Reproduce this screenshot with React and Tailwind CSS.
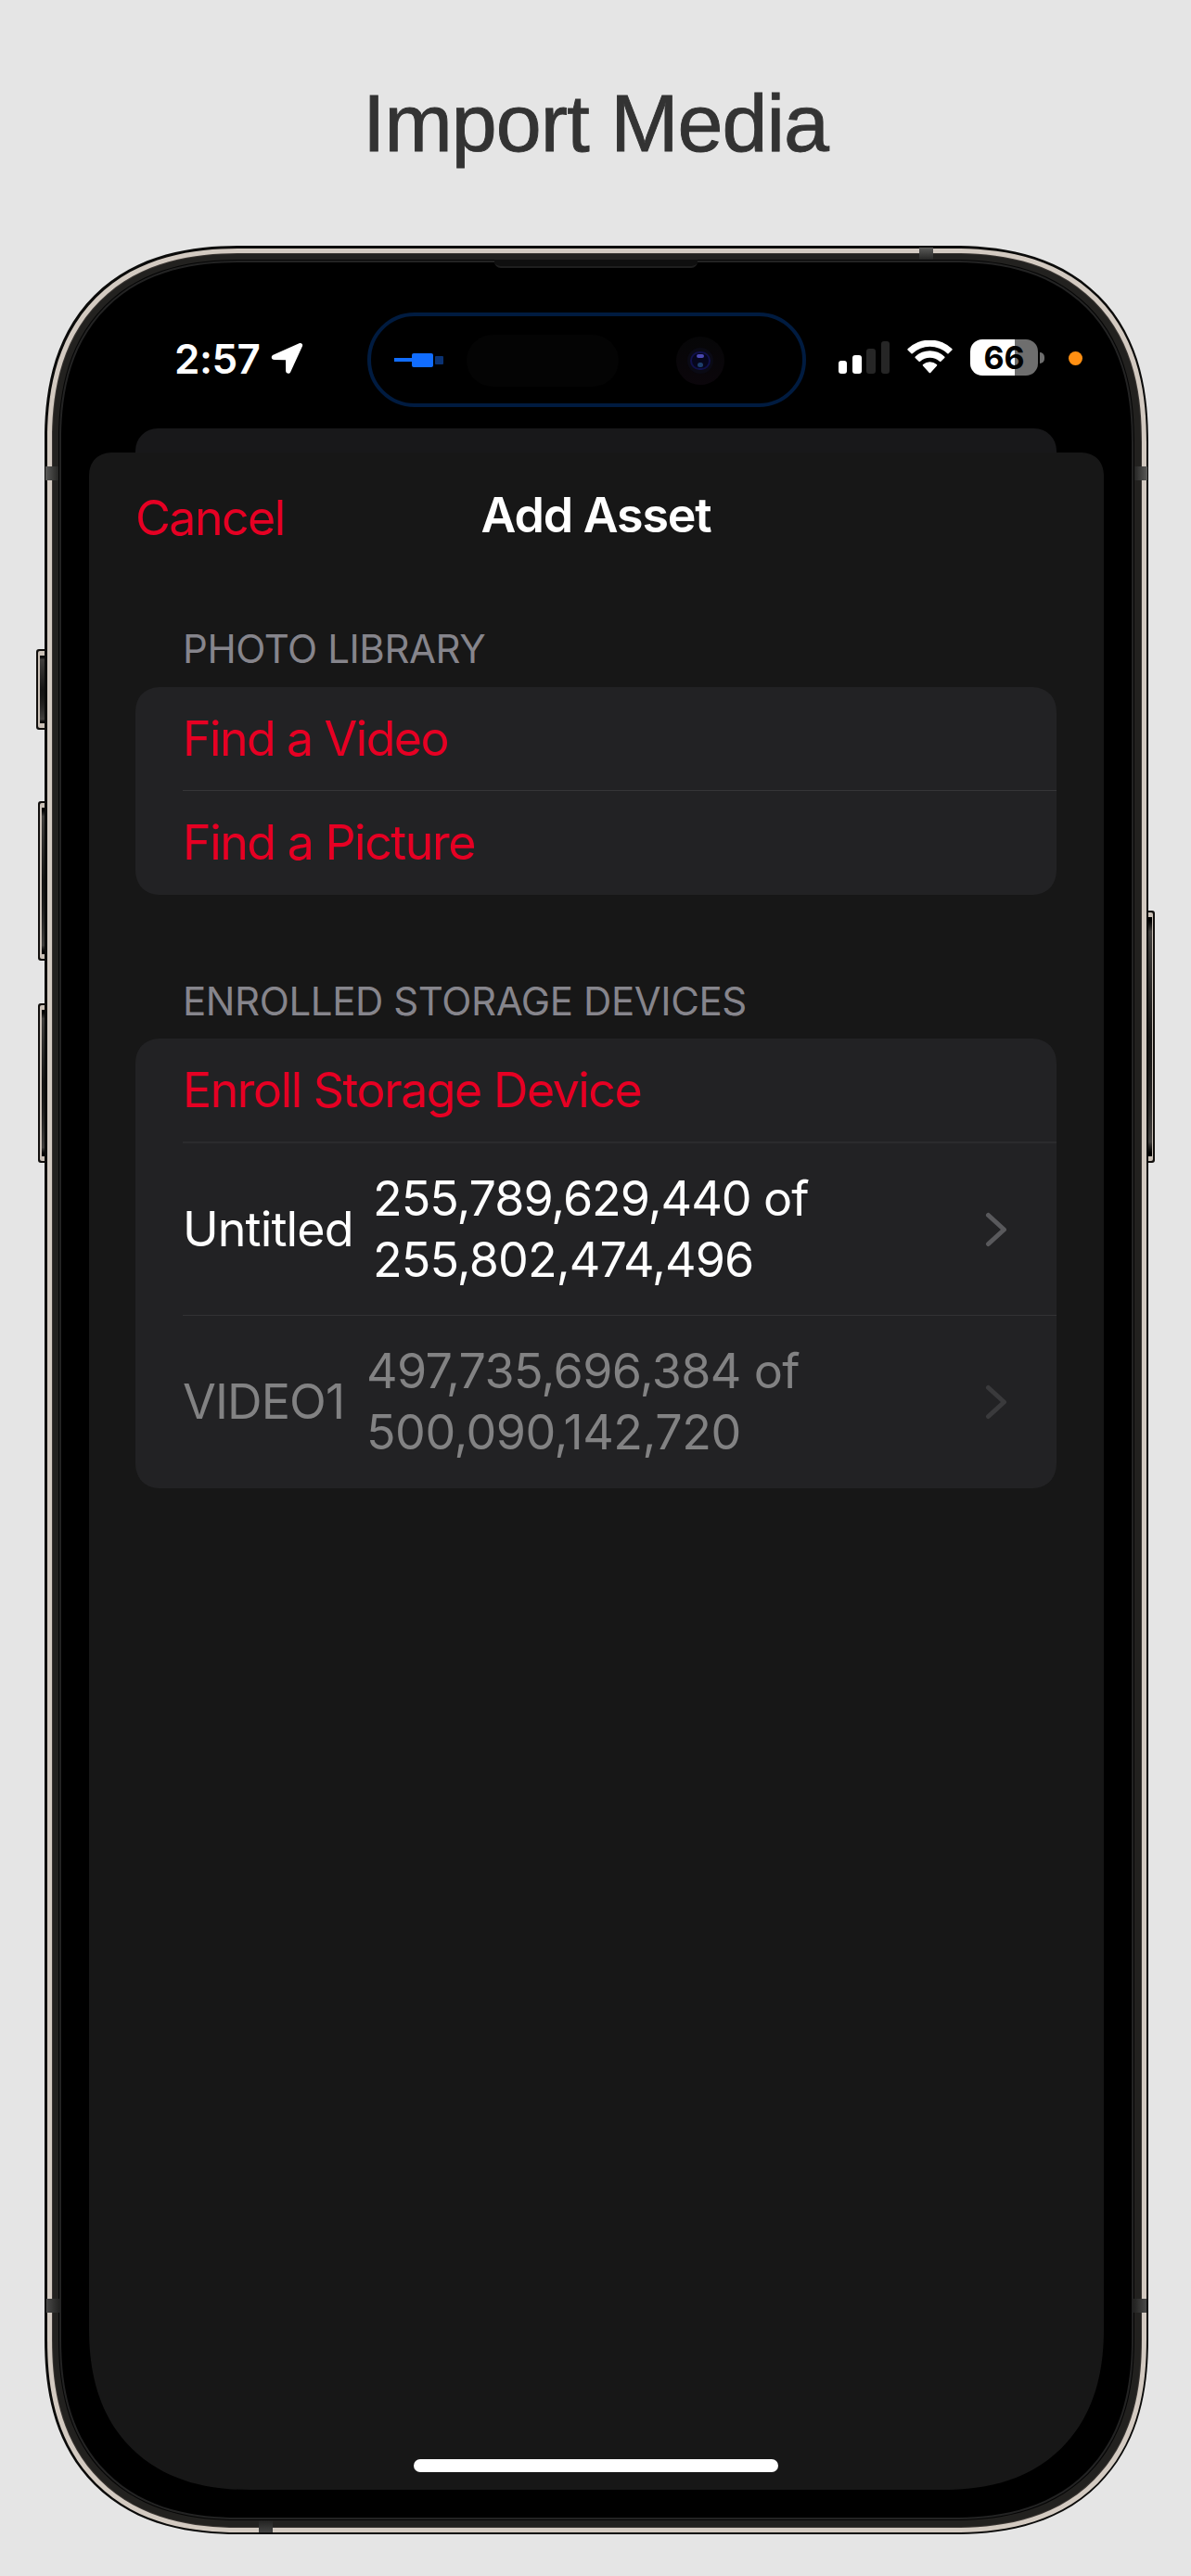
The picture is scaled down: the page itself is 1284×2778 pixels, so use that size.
import React from "react";

const RED = "text-[#e60023]";

function SideButton({ className, side }) {
  const left = side === "left";
  return (
    <div
      className={`absolute rounded-[3px] bg-[#12100e] ${left ? "rounded-r-none py-[2px] pl-[2px]" : "rounded-l-none py-[2px] pr-[2px]"} ${className}`}
    >
      <div
        className={`h-full bg-[#cbc1b7] py-[5px] ${left ? "rounded-l-[2px] pl-[2px]" : "rounded-r-[2px] pr-[1px]"}`}
      >
        <div className="h-full bg-linear-to-b from-black via-[#413f3d] via-6% to-black to-100%">
          <div className="h-full bg-linear-to-b from-transparent from-50% via-[#413f3d] via-94% to-black" />
        </div>
      </div>
    </div>
  );
}

function Chevron({ dim }) {
  return (
    <svg className="ml-auto mr-[52px] h-[38px] w-[25px] shrink-0" viewBox="0 0 25 38" fill="none">
      <path
        d="M3.5 3.5 L20.5 19 L3.5 34.5"
        stroke={dim ? "#3a3a3c" : "#59595c"}
        strokeWidth="5"
        strokeLinecap="round"
        strokeLinejoin="round"
      />
    </svg>
  );
}

function SectionTitle({ children, className }) {
  return (
    <h2 className={`pl-[51px] text-[42px] leading-[50px] text-[#86858c] ${className}`}>
      {children}
    </h2>
  );
}

function Card({ children, className }) {
  return (
    <div className={`w-[993px] rounded-[28px] bg-[#222224] [corner-shape:superellipse(1.2)] ${className}`}>
      {children}
    </div>
  );
}

function ActionRow({ children, className }) {
  return (
    <div className={`flex items-center pl-[51px] ${RED} ${className}`}>{children}</div>
  );
}

function Divider({ className }) {
  return <div className={`ml-[51px] ${className}`} />;
}

function StatusBar() {
  return (
    <div className="flex h-[149px] items-start pl-[92px]">
      <div className="mt-[49px] w-[104px] text-[44px] leading-[50px] font-semibold tracking-[-0.5px] text-white">
        2:57
      </div>
      <svg className="mt-[56px] h-[35px] w-[35px] shrink-0" viewBox="0 0 35 35">
        <path
          d="M3 13.6 L30.5 1.2 C33 0.2 34.9 2 33.9 4.6 L21.2 32.2 C20 34.8 16.2 34 16.1 31 L16 19.2 L4 19 C0.2 18.8 -0.4 15.2 3 13.6 Z"
          fill="white"
        />
      </svg>
      <div className="mt-[24px] ml-[69px] flex h-[102px] w-[473px] shrink-0 items-center rounded-full border-4 border-[#001b40] bg-black pl-[25px]">
        <div className="h-[4px] w-[19px] bg-[#116dff]" />
        <div className="h-[15px] w-[23px] rounded-[2px] bg-[#116dff]" />
        <div className="ml-[2px] h-[9px] w-[9px] rounded-[1px] bg-[#0a3272]" />
        <div className="mt-[2px] ml-[25px] h-[56px] w-[164px] rounded-full bg-[#040404]" />
        <div className="mt-[2px] ml-[62px] flex h-[52px] w-[52px] items-center justify-center rounded-full bg-linear-to-b from-[#060607] to-[#0b060b]">
          <div className="flex h-[28px] w-[28px] items-center justify-center rounded-full bg-[#0a0a14]">
            <div className="flex h-[20px] w-[22px] flex-col items-center justify-between rounded-full border-2 border-[#10104a] bg-[#06061c] py-[1px]">
              <div className="h-[4px] w-[8px] rounded-full bg-[#4a48b0]" />
              <div className="h-[5px] w-[6px] rounded-full bg-[#1d3f6c]" />
            </div>
          </div>
        </div>
      </div>
      <div className="mt-[55px] ml-[35px] flex h-[35px] w-[55px] shrink-0 items-end justify-between">
        <div className="h-[14px] w-[9px] rounded-[3px] bg-white" />
        <div className="h-[20px] w-[10px] rounded-[3px] bg-white" />
        <div className="h-[27px] w-[10px] rounded-[3px] bg-[#262626]" />
        <div className="h-[35px] w-[9px] rounded-[3px] bg-[#262626]" />
      </div>
      <svg className="mt-[54px] ml-[19px] h-[36px] w-[49px] shrink-0" viewBox="0 0 49 36">
        <path d="M0.6 10.6 Q-0.1 9.8 0.7 9.1 A34.5 34.5 0 0 1 48.3 9.1 Q49.1 9.8 48.4 10.6 L44.6 14.2 Q44 14.8 43.3 14.2 A27.4 27.4 0 0 0 5.7 14.2 Q5 14.8 4.4 14.2 Z" fill="white" />
        <path d="M8.7 19 Q8 18.2 8.8 17.5 A22.8 22.8 0 0 1 40.2 17.5 Q41 18.2 40.3 19 L36.4 22.8 Q35.7 23.4 35 22.8 A15.6 15.6 0 0 0 14 22.8 Q13.3 23.4 12.6 22.8 Z" fill="white" />
        <path d="M17 27.6 Q16.2 26.8 17.1 26.1 A11.4 11.4 0 0 1 31.9 26.1 Q32.8 26.8 32 27.6 L25.2 35 Q24.5 35.6 23.8 35 Z" fill="white" />
      </svg>
      <div className="mt-[53px] ml-[19px] flex h-[39px] w-[73px] shrink-0 items-center justify-center rounded-[13px] bg-linear-to-r from-white from-66% to-[#6e6e6e] to-66% text-[34px] leading-none font-bold text-black">
        66
      </div>
      <div className="mt-[67px] ml-[2px] h-[12px] w-[5px] shrink-0 rounded-r-full bg-[#6e6e6e]" />
      <div className="mt-[66px] ml-[26px] h-[15px] w-[15px] shrink-0 rounded-full bg-[#ff8f12]" />
    </div>
  );
}

function DeviceRow({ name, nameClass, used, usedClass, total, totalClass, className, dim }) {
  return (
    <div className={`flex items-center pl-[51px] ${dim ? "text-[#828283]" : "text-white"} ${className}`}>
      <div className={`shrink-0 ${nameClass}`}>{name}</div>
      <div className="leading-[66px] whitespace-nowrap">
        <div className={usedClass}>{used}</div>
        <div className={totalClass}>{total}</div>
      </div>
      <Chevron dim={dim} />
    </div>
  );
}

function Sheet() {
  return (
    <div className="flex h-[2197px] flex-col rounded-t-[26px] rounded-b-[174px] bg-[#171717] pl-[50px] text-[52px] [corner-shape:superellipse(1.2)]">
      <div className="grid h-[142px] w-[993px] grid-cols-[1fr_auto_1fr] items-center">
        <div className={`tracking-[-1.65px] ${RED}`}>Cancel</div>
        <div className="-translate-y-[3px] font-semibold tracking-[-1.2px] text-white">Add Asset</div>
      </div>

      <SectionTitle className="mt-[45px] tracking-[-0.42px]">PHOTO LIBRARY</SectionTitle>
      <Card className="mt-[16px]">
        <ActionRow className="h-[111px] tracking-[-1.68px]">Find a Video</ActionRow>
        <Divider className="h-px bg-[#353537]" />
        <ActionRow className="h-[112px] tracking-[-1.55px]">Find a Picture</ActionRow>
      </Card>

      <SectionTitle className="mt-[90px] tracking-[-0.4px]">ENROLLED STORAGE DEVICES</SectionTitle>
      <Card className="mt-[15px]">
        <ActionRow className="h-[111px] tracking-[-1.56px]">Enroll Storage Device</ActionRow>
        <Divider className="h-[2px] bg-[#2b2b2d]" />
        <DeviceRow
          className="h-[185px]"
          name="Untitled"
          nameClass="w-[205px] tracking-[-0.9px]"
          used="255,789,629,440 of"
          usedClass="tracking-[-1.04px]"
          total="255,802,474,496"
          totalClass="tracking-[-0.9px]"
        />
        <Divider className="h-px bg-[#323234]" />
        <DeviceRow
          dim
          className="h-[186px]"
          name="VIDEO1"
          nameClass="w-[198px] tracking-[-0.9px]"
          used="497,735,696,384 of"
          usedClass="tracking-[-0.62px]"
          total="500,090,142,720"
          totalClass="tracking-[-0.5px]"
        />
      </Card>

      <div className="mt-auto mb-[19px] ml-[300px] h-[14px] w-[393px] rounded-full bg-white" />
    </div>
  );
}

function Phone() {
  return (
    <div className="relative ml-[48px] h-[2468px] w-[1190px]">
      <SideButton side="left" className="top-[435px] left-[-9px] h-[87px] w-[10px]" />
      <SideButton side="left" className="top-[599px] left-[-7px] h-[172px] w-[8px]" />
      <SideButton side="left" className="top-[817px] left-[-7px] h-[172px] w-[8px]" />
      <SideButton side="right" className="top-[717px] right-[-7px] h-[272px] w-[8px]" />

      <div className="relative h-full rounded-[212px] bg-[#0b0b0a] p-[2.5px] [corner-shape:superellipse(1.25)]">
        <div className="h-full rounded-[209px] bg-[#d3cac1] p-[5px] [corner-shape:superellipse(1.25)]">
          <div className="h-full rounded-[204px] bg-[#3a3633] p-px [corner-shape:superellipse(1.25)]">
            <div className="h-full rounded-[203px] bg-[#22211f] p-[6.5px] [corner-shape:superellipse(1.25)]">
              <div className="h-full rounded-[197px] bg-[#050505] p-px [corner-shape:superellipse(1.25)]">
                <div className="h-full rounded-[196px] bg-[#232323] p-[2px] [corner-shape:superellipse(1.25)]">
                  <div className="h-full rounded-[194px] bg-black px-[30px] pt-[30px] font-['Inter',sans-serif] [corner-shape:superellipse(1.25)]">
                    <StatusBar />
                    <div className="ml-[50px] h-[26px] w-[993px] rounded-t-[24px] bg-[#18181a]" />
                    <Sheet />
                  </div>
                </div>
              </div>
            </div>
          </div>
        </div>
        <div className="absolute top-[15px] left-[485px] h-[9px] w-[219px] rounded-b-[7px] border-b-2 border-[#1f1f1f] bg-[#0f0f0f]" />
        <div className="absolute top-[2px] left-[943px] h-[13px] w-[15px] bg-linear-to-b from-[#5c5c5a] to-[#262625]" />
        <div className="absolute bottom-[2px] left-[231px] h-[13px] w-[15px] bg-linear-to-t from-[#454544] to-[#222221]" />
        <div className="absolute top-[238px] left-[1px] h-[15px] w-[14px] bg-linear-to-r from-[#5c5c5a] to-[#262625]" />
        <div className="absolute top-[238px] right-[1px] h-[15px] w-[14px] bg-linear-to-l from-[#5c5c5a] to-[#262625]" />
        <div className="absolute top-[2214px] left-[2px] h-[15px] w-[14px] bg-linear-to-r from-[#4a4a49] to-[#222221]" />
        <div className="absolute top-[2214px] right-[2px] h-[15px] w-[14px] bg-linear-to-l from-[#4a4a49] to-[#222221]" />
      </div>
    </div>
  );
}

export default function App() {
  return (
    <div className="h-[2778px] w-[1284px] overflow-hidden bg-[#e5e5e5]">
      <h1 className="h-[265px] pt-[82px] text-center font-['Liberation_Sans',sans-serif] text-[88px] leading-[101px] tracking-[-0.95px] text-[#333333] [-webkit-text-stroke:0.9px_#333333]">
        Import Media
      </h1>
      <Phone />
    </div>
  );
}
